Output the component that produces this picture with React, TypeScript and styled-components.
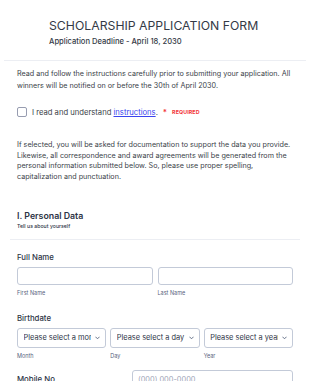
import React from "react";
import styled, { createGlobalStyle } from "styled-components";

const Global = createGlobalStyle`
  html, body { margin: 0; padding: 0; background: #fff; }
  body { font-family: Inter, "Noto Sans", sans-serif; color: #343a46; }
  * { box-sizing: border-box; }
`;

const Page = styled.div`
  width: 310px;
  height: 381px;
  overflow: hidden;
  background: #fff;
  padding-top: 18px;
`;

const Header = styled.header`
  padding: 0 0 0 49px;
  display: flex;
  flex-direction: column;
  gap: 3px;
`;

const Title = styled.h1`
  margin: 0;
  font-size: 12.25px;
  font-weight: 400;
  line-height: 16px;
  color: #343a46;
`;

const Subtitle = styled.div`
  font-size: 7.6px;
  font-weight: 500;
  line-height: 10px;
  color: #343a46;
`;

const Rule = styled.hr<{ $inset: number; $top: number }>`
  border: 0;
  border-top: 1px solid #eceef3;
  margin: ${(p) => p.$top}px ${(p) => p.$inset}px 0;
`;

const Body = styled.div`
  padding: 0 17px;
`;

const Para = styled.p<{ $top: number; $lh: number }>`
  margin: ${(p) => p.$top}px 0 0;
  font-size: 7.2px;
  line-height: ${(p) => p.$lh}px;
  color: #3b3f49;
`;

const CheckRow = styled.label`
  display: flex;
  align-items: center;
  gap: 5px;
  margin-top: 15px;
  font-size: 7.65px;
  color: #3b3f49;
`;

const Box = styled.span`
  width: 10px;
  height: 10px;
  border: 1px solid #979cb0;
  border-radius: 2px;
  flex: none;
`;

const Link = styled.a`
  color: #3a44ee;
  text-decoration: underline;
`;

const Star = styled.span`
  color: #f23a3c;
  font-weight: 700;
`;

const Required = styled.span`
  color: #f23a3c;
  font-size: 5.3px;
  font-weight: 700;
  letter-spacing: 0.1px;
`;

const SectionTitle = styled.h2`
  margin: 27px 0 0;
  font-size: 8.8px;
  font-weight: 600;
  line-height: 12px;
  color: #2c3345;
`;

const SectionSub = styled.div`
  font-size: 5.2px;
  font-weight: 500;
  line-height: 8px;
  color: #2c3345;
`;

const Field = styled.div<{ $top: number }>`
  margin-top: ${(p) => p.$top}px;
`;

const Label = styled.div`
  font-size: 7.8px;
  font-weight: 500;
  line-height: 10px;
  color: #2c3345;
  margin-bottom: 5px;
`;

const Grid = styled.div<{ $cols: number; $gap: number }>`
  display: grid;
  grid-template-columns: repeat(${(p) => p.$cols}, minmax(0, 1fr));
  column-gap: ${(p) => p.$gap}px;
`;

const Input = styled.div`
  height: 18px;
  border: 1px solid #c3cad8;
  border-radius: 3px;
  background: #fff;
`;

const Select = styled.div`
  height: 20px;
  border: 1px solid #c3cad8;
  border-radius: 3px;
  display: flex;
  align-items: center;
  padding: 0 5px 0 5.5px;
  gap: 4px;
  font-size: 7.4px;
  color: #2c3345;
  overflow: hidden;
`;

const SelectText = styled.span`
  flex: 1;
  min-width: 0;
  white-space: nowrap;
  overflow: hidden;
`;

const Sub = styled.div`
  font-size: 5.5px;
  color: #57647e;
  margin-top: 5px;
  line-height: 7px;
`;

const PhoneRow = styled.div`
  display: grid;
  grid-template-columns: 115px 1fr;
  margin-top: 10px;
  align-items: start;
`;

const PhoneLabel = styled(Label)`
  margin-top: 4px;
`;

const PhoneInput = styled.div`
  height: 19px;
  border: 1px solid #c3cad8;
  border-radius: 3px;
  padding: 0 5px;
  display: flex;
  align-items: center;
  font-size: 7.4px;
  color: #a0a5b8;
`;

const ChevronSvg = styled.svg`
  flex: none;
`;

const Chevron = () => (
  <ChevronSvg width="5" height="4" viewBox="0 0 5 4" fill="none">
    <path d="M0.7 1 L2.5 2.8 L4.3 1" stroke="#57647e" strokeWidth="0.9" strokeLinecap="round" strokeLinejoin="round" />
  </ChevronSvg>
);

export default function App() {
  return (
    <Page>
      <Global />
      <Header>
        <Title>SCHOLARSHIP APPLICATION FORM</Title>
        <Subtitle>Application Deadline - April 18, 2030</Subtitle>
      </Header>
      <Rule $inset={4} $top={13} />
      <Body>
        <Para $top={7} $lh={12}>
          Read and follow the instructions carefully prior to submitting your application. All winners will be notified on or before the 30th of April 2030.
        </Para>
        <CheckRow>
          <Box />
          <span>
            I read and understand <Link href="#">instructions</Link>.
          </span>
          <Star>*</Star>
          <Required>REQUIRED</Required>
        </CheckRow>
        <Para $top={23} $lh={10.7}>
          If selected, you will be asked for documentation to support the data you provide. Likewise, all correspondence and award agreements will be generated from the personal information submitted below. So, please use proper spelling, capitalization and punctuation.
        </Para>
        <SectionTitle>I. Personal Data</SectionTitle>
        <SectionSub>Tell us about yourself</SectionSub>
      </Body>
      <Rule $inset={10} $top={9} />
      <Body>
        <Field $top={12}>
          <Label>Full Name</Label>
          <Grid $cols={2} $gap={5}>
            <div>
              <Input />
              <Sub>First Name</Sub>
            </div>
            <div>
              <Input />
              <Sub>Last Name</Sub>
            </div>
          </Grid>
        </Field>
        <Field $top={16}>
          <Label>Birthdate</Label>
          <Grid $cols={3} $gap={4}>
            <div>
              <Select>
                <SelectText>Please select a month</SelectText>
                <Chevron />
              </Select>
              <Sub>Month</Sub>
            </div>
            <div>
              <Select>
                <SelectText>Please select a day</SelectText>
                <Chevron />
              </Select>
              <Sub>Day</Sub>
            </div>
            <div>
              <Select>
                <SelectText>Please select a year</SelectText>
                <Chevron />
              </Select>
              <Sub>Year</Sub>
            </div>
          </Grid>
        </Field>
        <PhoneRow>
          <PhoneLabel>Mobile No</PhoneLabel>
          <PhoneInput>(000) 000-0000</PhoneInput>
        </PhoneRow>
      </Body>
    </Page>
  );
}
